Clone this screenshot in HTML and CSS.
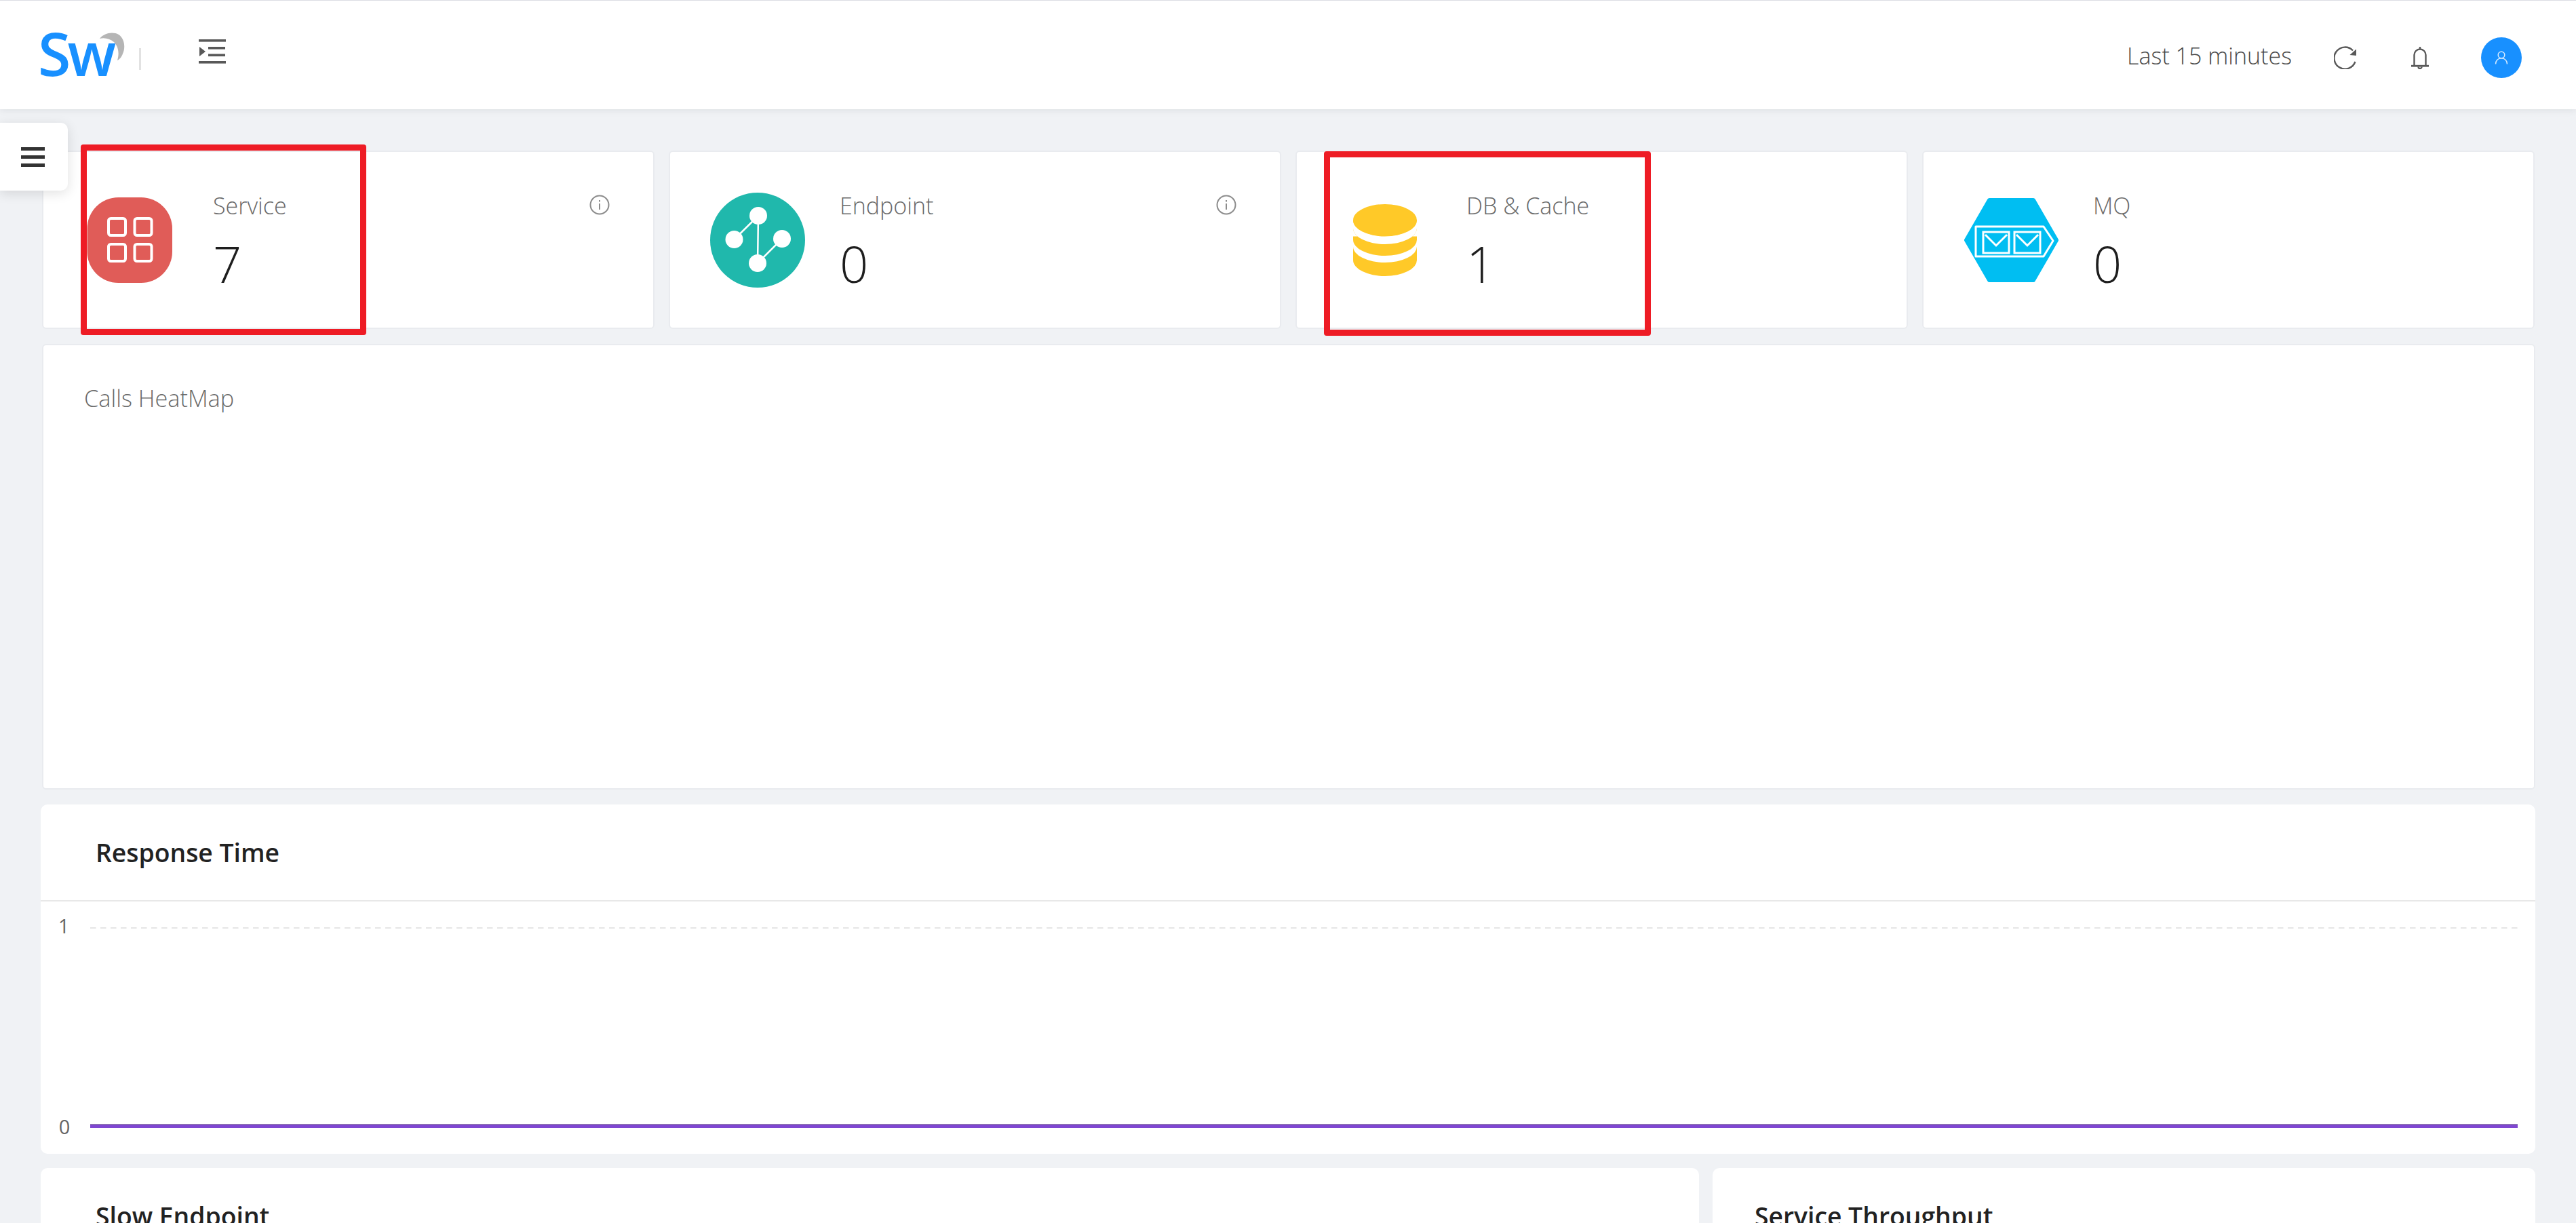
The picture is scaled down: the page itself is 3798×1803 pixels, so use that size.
FILE: index.html
```html
<!DOCTYPE html>
<html lang="en">
<head>
<meta charset="utf-8">
<title>Dashboard</title>
<link rel="stylesheet" href="styles.css">
</head>
<body>
<div class="page">
  <header class="topbar">
    <div class="logo">
      <span class="logo-text">Sw</span>
      <svg class="logo-arc" width="40" height="42" viewBox="0 0 40 42"><path d="M1 9C7 1 20-2 29 3c9 6 10 20 6 28-1 4-5 9-8 10 3-10 2-20-5-27C16 9 8 7 1 9z" fill="#b5b5b5"/></svg>
    </div>
    <span class="logo-divider"></span>
    <svg class="toggle" width="40" height="36" viewBox="0 0 40 36" fill="#595959"><rect x="0" y="0" width="40" height="3.6"/><rect x="14" y="11" width="25" height="3.6"/><rect x="14" y="21.5" width="25" height="3.6"/><rect x="0" y="32" width="40" height="3.6"/><path d="M1 11v14l9-7z"/></svg>
    <div class="tools">
      <span class="range">Last 15 minutes</span>
      <svg class="refresh" width="34" height="34" viewBox="0 0 34 34" fill="none"><path d="M31.5 23A16 16 0 1 1 28 6.5" stroke="#595959" stroke-width="2.4"/><path d="M33 4.500V14l-9.500-1z" fill="#595959"/></svg>
      <svg class="bell" width="26" height="34" viewBox="0 0 26 34" fill="none" stroke="#595959" stroke-width="2.4"><path d="M4.500 29V13a8.500 8.500 0 0 1 17 0v16"/><path d="M0 29.200h26" stroke-width="2.800"/><path d="M13 1v4"/><path d="M10.500 30.500a2.500 2.500 0 0 0 5 0"/></svg>
      <span class="avatar"><svg width="20" height="20" viewBox="0 0 20 20" fill="none" stroke="#d6eaff" stroke-width="1.500"><circle cx="10" cy="6" r="4.800"/><path d="M1.500 19.500c0-5 3.500-8.700 8.500-8.700s8.500 3.700 8.500 8.700"/></svg></span>
    </div>
  </header>

  <main class="content">
    <section class="stats">
      <article class="card">
        <svg class="card-icon" width="140" height="140" viewBox="0 0 140 140" fill="none"><rect x="5.500" y="7" width="125.500" height="126" rx="46" fill="#e05c58"/><g stroke="#fff" stroke-width="4"><rect x="37" y="38" width="25" height="25" rx="3.500"/><rect x="75.500" y="38" width="25" height="25" rx="3.500"/><rect x="37" y="76" width="25" height="25" rx="3.500"/><rect x="75.500" y="76" width="25" height="25" rx="3.500"/></g></svg>
        <div class="card-text"><div class="card-label">Service</div><div class="card-value">7</div></div>
        <svg class="info" width="30" height="30" viewBox="0 0 30 30" fill="none" stroke="#8c8c8c" stroke-width="2"><circle cx="15" cy="15" r="13.500"/><path d="M15 13v9M15 8v2.500"/></svg>
      </article>
      <article class="card">
        <svg class="card-icon" width="140" height="140" viewBox="0 0 140 140"><circle cx="70" cy="70" r="70" fill="#20b8ac"/><path d="M71 34 35.500 69M71 34 70 104 106 68" fill="none" stroke="#fff" stroke-width="2.500"/><g fill="#fff"><circle cx="71" cy="34" r="13"/><circle cx="35.500" cy="69" r="13"/><circle cx="106" cy="68" r="13"/><circle cx="70" cy="104" r="13"/></g></svg>
        <div class="card-text"><div class="card-label">Endpoint</div><div class="card-value">0</div></div>
        <svg class="info" width="30" height="30" viewBox="0 0 30 30" fill="none" stroke="#8c8c8c" stroke-width="2"><circle cx="15" cy="15" r="13.500"/><path d="M15 13v9M15 8v2.500"/></svg>
      </article>
      <article class="card">
        <svg class="card-icon" width="140" height="140" viewBox="0 0 140 140"><path d="M24 41h94v58.500a47 23.500 0 0 1-94 0z" fill="#ffc928"/><path d="M24 52.500a47 23.500 0 0 0 94 0v27a47 23.500 0 0 1-94 0z" fill="#fff"/><path d="M24 64.500h94v5a47 23.500 0 0 1-94 0z" fill="#ffc928"/><path d="M24 41a47 23.500 0 0 0 94 0v11.500a47 23.500 0 0 1-94 0z" fill="#fff"/><ellipse cx="71" cy="40.500" rx="47" ry="23.500" fill="#ffc928"/></svg>
        <div class="card-text"><div class="card-label">DB &amp; Cache</div><div class="card-value">1</div></div>
      </article>
      <article class="card">
        <svg class="card-icon" width="140" height="140" viewBox="0 0 140 140" fill="none"><path d="M4 70 38 11h65l34 59-34 59H38z" fill="#00bef2" stroke="#00bef2" stroke-width="6" stroke-linejoin="round"/><g stroke="#fff" stroke-width="3"><path d="M18 50h100l14 21-14 23H18z" stroke-linejoin="round"/><rect x="29" y="58" width="38" height="31"/><rect x="75" y="58" width="38" height="31"/><path d="M32 62 48 78 64 62M78 62 94 78 110 62"/></g></svg>
        <div class="card-text"><div class="card-label">MQ</div><div class="card-value">0</div></div>
      </article>
    </section>

    <section class="heatmap"><h3 class="heatmap-title">Calls HeatMap</h3></section>

    <section class="panel panel-chart">
      <h2 class="panel-title">Response Time</h2>
      <svg class="chart" width="3678" height="372" viewBox="0 0 3678 372">
        <text class="axis" x="34" y="47" text-anchor="middle">1</text>
        <text class="axis" x="35" y="343" text-anchor="middle">0</text>
        <line x1="73" y1="39" x2="3652" y2="39" stroke="#e6e6e6" stroke-width="2" stroke-dasharray="8.500 6.500"/>
        <rect x="73" y="328" width="3579" height="6" fill="#7f47d1"/>
        <rect x="73" y="328" width="3579" height="1" fill="#8d7aa8"/>
      </svg>
    </section>

    <section class="lower">
      <div class="panel"><h2 class="panel-title">Slow Endpoint</h2></div>
      <div class="panel panel-narrow"><h2 class="panel-title">Service Throughput</h2></div>
    </section>
  </main>

  <button class="float-menu" type="button" aria-label="Menu"><span></span><span></span><span></span></button>
  <div class="mark mark-service"></div>
  <div class="mark mark-db"></div>
</div>
</body>
</html>
```
FILE: styles.css
```css
* { box-sizing: border-box; }
html, body { margin: 0; padding: 0; }
body { background: #f0f2f5; font-family: "Open Sans", "Noto Sans", sans-serif; }
.page { position: relative; width: 3798px; height: 1803px; overflow: hidden; }

.topbar {
  display: flex; align-items: center; height: 161px; padding-left: 60px; padding-top: 8px;
  background: #fff; border-top: 1px solid #dcdde3;
  box-shadow: 0 2px 10px rgba(0, 21, 41, .08);
  position: relative;
}
.logo { position: relative; width: 126px; height: 67px; overflow: hidden; align-self: flex-start; margin-top: 39px; }
.logo-text { position: absolute; left: -4px; top: -30px; font-size: 88px; line-height: 120px; font-weight: 600; color: #1890ff; letter-spacing: -5px; }
.logo-arc { position: absolute; left: 86px; top: 0; }
.logo-divider { width: 3px; height: 32px; background: #e2e2e2; margin-left: 19px; margin-top: 3px; }
.toggle { margin-left: 85px; margin-top: -18px; }
.tools { display: flex; align-items: center; margin-left: auto; padding-right: 80px; }
.range { font-size: 34px; font-weight: 300; color: #4a4a4a; line-height: 40px; margin-top: -6px; white-space: nowrap; }
.refresh { margin-left: 62px; }
.bell { margin-left: 80px; }
.avatar { display: flex; align-items: center; justify-content: center; width: 60px; height: 60px; border-radius: 50%; background: #1890ff; margin-left: 77px; }

.content { padding: 61px 60px 0 60px; }
.stats { display: grid; grid-template-columns: repeat(4, 903px); column-gap: 21px; margin-left: 2px; }
.card {
  position: relative; display: flex; align-items: center; height: 263px;
  background: #fff; border: 2px solid #e9ebef; border-radius: 6px;
}
.card-icon { flex: none; margin-left: 59px; }
.card-text { margin-left: 51px; margin-top: 11px; }
.card-label { font-size: 34px; font-weight: 300; color: #6a6a6a; line-height: 45px; }
.card-value { font-size: 74px; font-weight: 300; color: #1e1e1e; line-height: 100px; margin-top: 13px; margin-bottom: -2px; }
.info { position: absolute; right: 64px; top: 63px; }

.heatmap { height: 657px; margin: 22px 0 0 2px; padding: 55px 60px; background: #fff; border: 2px solid #e9ebef; border-radius: 6px; }
.heatmap-title { margin: 0; font-size: 34.300px; font-weight: 300; color: #6a6a6a; line-height: 45px; }

.panel { background: #fff; border-radius: 10px; height: 515px; }
.panel-chart { margin-top: 22px; }
.panel-title { margin: 0; height: 143px; padding: 46px 0 0 81px; font-size: 37.300px; line-height: 50px; font-weight: 600; color: #222; }
.panel-chart .panel-title { border-bottom: 2px solid #e8e8e8; }
.chart { display: block; }
.axis { font-size: 29px; font-weight: 400; fill: #666; font-family: "Open Sans", sans-serif; }
.lower { display: grid; grid-template-columns: 2445px 1213px; column-gap: 20px; margin-top: 21px; }
.panel-narrow .panel-title { padding-left: 62px; }

.float-menu {
  position: absolute; left: 0; top: 181px; width: 100px; height: 100px; padding: 0 0 0 31px;
  display: flex; flex-direction: column; justify-content: center; gap: 7px;
  background: #fff; border: 0; border-radius: 0 10px 10px 0;
  box-shadow: 0 4px 18px rgba(0, 0, 0, .12);
}
.float-menu span { display: block; width: 35px; height: 5px; background: #333; }

.mark { position: absolute; border: 9px solid #ee1c25; border-radius: 4px; }
.mark-service { left: 119px; top: 213px; width: 421px; height: 281px; }
.mark-db { left: 1952px; top: 223px; width: 482px; height: 272px; }
```
